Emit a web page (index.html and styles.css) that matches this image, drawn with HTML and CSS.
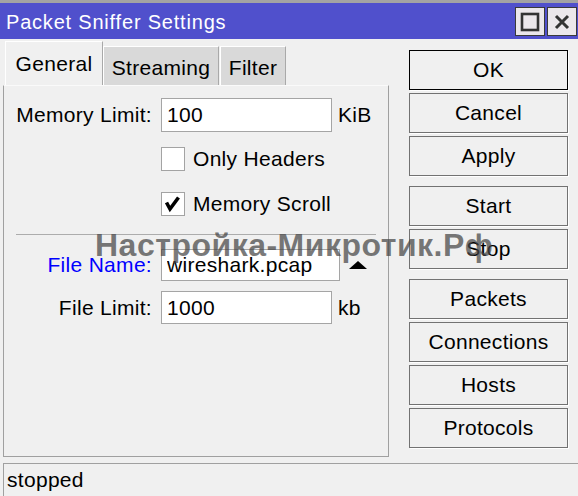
FILE: index.html
```html
<!DOCTYPE html>
<html lang="en">
<head>
    <meta charset="UTF-8">
    <title>Packet Sniffer Settings</title>
    <link rel="stylesheet" href="styles.css">
</head>
<body>
<div class="window">
    <div class="titlebar">
        <span class="title">Packet Sniffer Settings</span>
        <div class="title-btns">
            <div class="tbtn">
                <svg width="20" height="20" viewBox="0 0 20 20"><rect x="2" y="2" width="16" height="16" fill="none" stroke="#333" stroke-width="2.6"/></svg>
            </div>
            <div class="tbtn">
                <svg width="16" height="16" viewBox="0 0 16 16"><path d="M2 2 L14 14 M14 2 L2 14" stroke="#333" stroke-width="3"/></svg>
            </div>
        </div>
    </div>

    <div class="main">
        <div class="left">
            <div class="tabs">
                <div class="tab active">General</div>
                <div class="tab tab-streaming">Streaming</div>
                <div class="tab tab-filter">Filter</div>
            </div>
            <div class="panel">
                <div class="row row-mem">
                    <label class="label">Memory Limit:</label>
                    <input class="field" type="text" value="100">
                    <span class="unit">KiB</span>
                </div>
                <div class="check-row check-first">
                    <span class="checkbox"></span>
                    <span>Only Headers</span>
                </div>
                <div class="check-row check-second">
                    <span class="checkbox">
                        <svg width="23" height="23" viewBox="0 0 23 23"><polyline points="5.5,10.5 9,17 17.5,5.5" fill="none" stroke="#000" stroke-width="3.6"/></svg>
                    </span>
                    <span>Memory Scroll</span>
                </div>
                <div class="separator"></div>
                <div class="row row-file">
                    <label class="label link">File Name:</label>
                    <input class="field field-wide" type="text" value="wireshark.pcap">
                    <span class="arrow"></span>
                </div>
                <div class="row row-limit">
                    <label class="label">File Limit:</label>
                    <input class="field" type="text" value="1000">
                    <span class="unit">kb</span>
                </div>
            </div>
        </div>

        <div class="actions">
            <div class="group">
                <button class="btn default">OK</button>
                <button class="btn">Cancel</button>
                <button class="btn">Apply</button>
            </div>
            <div class="group">
                <button class="btn">Start</button>
                <button class="btn">Stop</button>
            </div>
            <div class="group">
                <button class="btn">Packets</button>
                <button class="btn">Connections</button>
                <button class="btn">Hosts</button>
                <button class="btn">Protocols</button>
            </div>
        </div>
    </div>

    <div class="status">stopped</div>

    <div class="watermark">Настройка-Микротик.Рф</div>
</div>
</body>
</html>
```

FILE: styles.css
```css
body {
    margin: 0;
    background: #f0f0f0;
    font-family: "Liberation Sans", Arial, sans-serif;
    font-size: 21px;
    letter-spacing: 0.3px;
    color: #000;
}
.window {
    position: relative;
    width: 578px;
    height: 496px;
    overflow: hidden;
}

/* title bar */
.titlebar {
    height: 36px;
    border-top: 3px solid #a3a3a3;
    background: #5050cc;
    display: flex;
    align-items: center;
    justify-content: space-between;
    padding-left: 6px;
    color: #fff;
}
.title {
    font-size: 20px;
    letter-spacing: 0.8px;
    padding-top: 3px;
}
.title-btns {
    display: flex;
    gap: 2px;
    margin-right: 1px;
    margin-top: 1px;
}
.tbtn {
    width: 28px;
    height: 27px;
    border: 1px solid #3a3a3a;
    background: #ebe7eb;
    display: flex;
    align-items: center;
    justify-content: center;
}

.main {
    display: flex;
    height: 421px;
}
.left {
    margin-left: 3px;
    width: 386px;
}

/* tabs */
.tabs {
    margin-top: 2px;
    padding-left: 2px;
    height: 44px;
    display: flex;
    align-items: flex-end;
}
.tab {
    box-sizing: border-box;
    height: 39px;
    display: flex;
    align-items: center;
    justify-content: center;
    padding-top: 3px;
    background: #d9d9d9;
    border-top: 1px solid #fff;
    border-left: 1px solid #fff;
    border-right: 1px solid #a9a9a9;
}
.tab.active {
    width: 98px;
    height: 44px;
    padding-top: 0;
    background: #f0f0f0;
}
.tab-streaming {
    width: 116px;
}
.tab-filter {
    width: 66px;
    margin-left: 1px;
}

/* tab page */
.panel {
    box-sizing: border-box;
    height: 372px;
    border: 1px solid #a0a0a0;
    border-top-color: #fafafa;
}
.row {
    display: flex;
    align-items: center;
}
.label {
    width: 148px;
    text-align: right;
    margin-right: 9px;
}
.link {
    color: #0000ff;
}
.field {
    box-sizing: border-box;
    width: 171px;
    height: 34px;
    border: 1px solid #a5a5a5;
    background: #fff;
    padding: 0 5px;
    font: inherit;
    letter-spacing: 0.3px;
    outline: none;
}
.field-wide {
    width: 179px;
    height: 32px;
}
.unit {
    margin-left: 6px;
}
.row-mem {
    margin-top: 12px;
}
.row-file {
    margin-top: 14px;
}
.row-limit {
    margin-top: 10px;
}
.row-limit .field {
    height: 33px;
}
.arrow {
    margin-left: 9px;
    width: 0;
    height: 0;
    border-left: 9.5px solid transparent;
    border-right: 9.5px solid transparent;
    border-bottom: 8px solid #000;
}

.check-row {
    display: flex;
    align-items: center;
    gap: 8px;
    padding-left: 157px;
}
.check-first {
    margin-top: 15px;
}
.check-second {
    margin-top: 21px;
}
.checkbox {
    box-sizing: border-box;
    width: 24px;
    height: 24px;
    border: 1px solid #a3a3a3;
    background: #fff;
    display: block;
}
.checkbox svg {
    display: block;
    margin: -1px 0 0 -1px;
}
.separator {
    margin: 18px 12px 0 12px;
    border-top: 1px solid #acacac;
}

/* right hand buttons */
.actions {
    margin-left: 20px;
    padding-top: 11px;
    width: 159px;
    display: flex;
    flex-direction: column;
    gap: 10px;
}
.group {
    display: flex;
    flex-direction: column;
    gap: 3px;
}
.btn {
    box-sizing: border-box;
    height: 40px;
    width: 159px;
    border: 1px solid #727272;
    background: #f0f0f0;
    box-shadow: 1px 1px 0 #fff;
    font: inherit;
    letter-spacing: 0.3px;
    color: #000;
    padding: 0;
}
.btn.default {
    border-color: #000;
}

/* status line */
.status {
    box-sizing: border-box;
    margin-top: 3px;
    margin-left: 3px;
    height: 36px;
    border-top: 1px solid #a0a0a0;
    border-left: 1px solid #a0a0a0;
    padding-left: 3px;
    padding-bottom: 4px;
    display: flex;
    align-items: center;
}

.watermark {
    position: absolute;
    left: 95px;
    top: 229px;
    font-size: 32px;
    line-height: 32px;
    font-weight: bold;
    letter-spacing: 0.5px;
    color: rgba(70, 70, 70, 0.72);
    white-space: nowrap;
}
```
